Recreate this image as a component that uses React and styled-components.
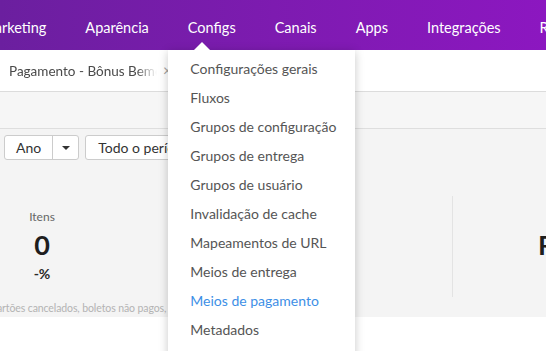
import React from 'react'
import styled, { createGlobalStyle } from 'styled-components'

const GlobalStyle = createGlobalStyle`
  html, body {
    margin: 0;
    padding: 0;
    background: #ffffff;
    overflow: hidden;
  }
  body {
    font-family: Lato, 'Open Sans', Arial, sans-serif;
    -webkit-font-smoothing: antialiased;
  }
`

const Page = styled.div`
  width: 546px;
  height: 351px;
  overflow: hidden;
  position: relative;
`

// ---- top navigation ----

const TopNav = styled.nav`
  height: 50px;
  background: linear-gradient(90deg, #6b1f9f 0%, #7d1bb0 50%, #8c17c0 100%);
  position: relative;
  z-index: 10;
`

const NavTrack = styled.ul`
  display: flex;
  height: 100%;
  margin: 0 0 0 -38px;
  padding: 0;
  list-style: none;
`

const NavItem = styled.li`
  position: relative;
  display: flex;
  align-items: center;
  padding: 4px 19.5px 0;
  color: #ffffff;
  font-size: 14.5px;
  white-space: nowrap;
`

const Dropdown = styled.ul`
  position: absolute;
  top: 50px;
  left: 0;
  width: 187px;
  margin: 0;
  padding: 4px 0;
  list-style: none;
  background: #ffffff;
  box-shadow: 0 2px 9px rgba(0, 0, 0, 0.22);

  &::before {
    content: '';
    position: absolute;
    top: -8px;
    left: 26px;
    border-left: 8px solid transparent;
    border-right: 8px solid transparent;
    border-bottom: 8px solid #ffffff;
  }
`

const MenuItem = styled.li`
  height: 29px;
  display: flex;
  align-items: center;
  padding-left: 22px;
  font-size: 14px;
  color: ${p => (p.$active ? '#3d8fe6' : '#555555')};
  white-space: nowrap;
`

// ---- tab strip ----

const TabBar = styled.div`
  height: 41px;
  background: #ffffff;
  border-bottom: 1px solid #dcdcdc;
  display: flex;
  align-items: center;
`

const Tab = styled.div`
  display: flex;
  align-items: center;
  padding-left: 9px;
  gap: 6px;
`

const TabLabel = styled.span`
  width: 148px;
  overflow: hidden;
  white-space: nowrap;
  font-size: 13.5px;
  color: #4a4a4a;
  -webkit-mask-image: linear-gradient(90deg, #000 86%, transparent 100%);
  mask-image: linear-gradient(90deg, #000 86%, transparent 100%);
`

const TabClose = styled.span`
  font-size: 15px;
  color: #a0a0a0;
  line-height: 1;
`

const SubBar = styled.div`
  height: 36px;
  background: #f6f6f6;
  border-bottom: 1px solid #dedede;
`

// ---- content ----

const Content = styled.main`
  background: #f4f4f4;
  height: 188px;
  padding-top: 6px;
  box-sizing: border-box;
`

const Controls = styled.div`
  display: flex;
  gap: 6px;
  padding-left: 4px;
`

const SplitButton = styled.div`
  display: flex;
  height: 25px;
  border: 1px solid #cccccc;
  border-radius: 3px;
  background: #ffffff;
  box-sizing: border-box;
`

const Btn = styled.div`
  display: flex;
  align-items: center;
  justify-content: center;
  height: 100%;
  padding: 0 ${p => p.$pad || 11}px;
  font-size: 14px;
  color: #333333;
  white-space: nowrap;
  box-sizing: border-box;
  & + & {
    border-left: 1px solid #cccccc;
  }
`

const Caret = styled.span`
  width: 0;
  height: 0;
  border-left: 4px solid transparent;
  border-right: 4px solid transparent;
  border-top: 4px solid #333333;
`

const Stats = styled.div`
  display: flex;
  margin: 36px 0 0 -100px;
  height: 101px;
`

const StatCol = styled.div`
  flex: 0 0 ${p => p.$w}px;
  display: flex;
  flex-direction: column;
  align-items: center;
  padding-top: 14px;
  box-sizing: border-box;
  border-left: ${p => (p.$sep ? '1px solid #e3e3e3' : 'none')};
`

const StatLabel = styled.div`
  font-size: 12px;
  color: #666666;
  line-height: 14px;
`

const StatValue = styled.div`
  font-size: 27px;
  font-weight: 700;
  color: #1e1e1e;
  line-height: 32px;
  margin-top: 5px;
  white-space: nowrap;
`

const StatDelta = styled.div`
  font-size: 14px;
  font-weight: 700;
  color: #2a2a2a;
  margin-top: 4px;
`

const Footnote = styled.div`
  margin: 5px 0 0 -8px;
  font-size: 10.5px;
  letter-spacing: -0.1px;
  color: #b3b3b3;
  white-space: nowrap;
`

const menu = [
  'Configurações gerais',
  'Fluxos',
  'Grupos de configuração',
  'Grupos de entrega',
  'Grupos de usuário',
  'Invalidação de cache',
  'Mapeamentos de URL',
  'Meios de entrega',
  'Meios de pagamento',
  'Metadados',
  'Parâmetros'
]

const navItems = ['Marketing', 'Aparência', 'Configs', 'Canais', 'Apps', 'Integrações', 'Relatórios']

export default function App () {
  return (
    <Page>
      <GlobalStyle />
      <TopNav>
        <NavTrack>
          {navItems.map(name => (
            <NavItem key={name}>
              {name}
              {name === 'Configs' && (
                <Dropdown>
                  {menu.map(m => (
                    <MenuItem key={m} $active={m === 'Meios de pagamento'}>{m}</MenuItem>
                  ))}
                </Dropdown>
              )}
            </NavItem>
          ))}
        </NavTrack>
      </TopNav>

      <TabBar>
        <Tab>
          <TabLabel>Pagamento - Bônus Bemol</TabLabel>
          <TabClose>×</TabClose>
        </Tab>
      </TabBar>
      <SubBar />

      <Content>
        <Controls>
          <SplitButton>
            <Btn $pad={11}>Ano</Btn>
            <Btn $pad={8.5}><Caret /></Btn>
          </SplitButton>
          <SplitButton>
            <Btn $pad={12}>Todo o período</Btn>
          </SplitButton>
        </Controls>

        <Stats>
          <StatCol $w={284}>
            <StatLabel>Itens</StatLabel>
            <StatValue>0</StatValue>
            <StatDelta>-%</StatDelta>
          </StatCol>
          <StatCol $w={268} $sep>
            <StatLabel>Ticket médio</StatLabel>
            <StatValue>0</StatValue>
            <StatDelta>-%</StatDelta>
          </StatCol>
          <StatCol $w={264} $sep>
            <StatLabel>Faturamento</StatLabel>
            <StatValue>R$ 0,00</StatValue>
            <StatDelta>-%</StatDelta>
          </StatCol>
        </Stats>
        <Footnote>cartões cancelados, boletos não pagos, pedidos cancelados</Footnote>
      </Content>
    </Page>
  )
}
